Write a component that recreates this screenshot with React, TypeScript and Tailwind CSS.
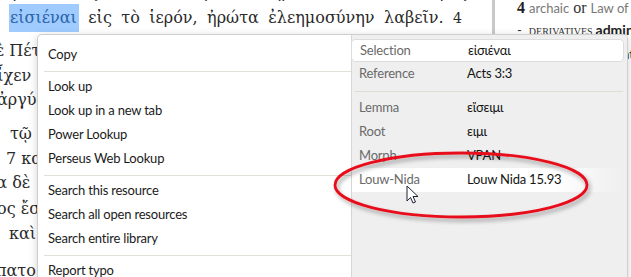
import type { ReactNode } from "react";

const greek = { fontFamily: '"DejaVu Serif", "Liberation Serif", serif' };
const serif = { fontFamily: '"Liberation Serif", "DejaVu Serif", serif' };
const sans = { fontFamily: 'Lato, "Noto Sans", sans-serif' };

// fragments of the text column that peek out left of the menu
const leftLines: { text: string; cls: string }[] = [
  { text: "δὲ Πέτ", cls: "mt-[6px] ml-[-14px]" },
  { text: "εἶχεν", cls: "mt-[0px] ml-[-11px]" },
  { text: "ἀργύρ", cls: "mt-[-1px] ml-[-3px]" },
  { text: "τῷ", cls: "mt-[9px] ml-[10px]" },
  { text: "7 κα", cls: "mt-[0px] ml-[6px]" },
  { text: "ια δὲ", cls: "mt-[-1px] ml-[-10px]" },
  { text: "ος ἔσ", cls: "mt-[1px] ml-[-3px]" },
  { text: "καὶ", cls: "mt-[0px] ml-[9px]" },
  { text: "πατο", cls: "mt-[12px] ml-[-4px]" },
];

// bits of the dictionary pane that show past the menu's right edge
const rightLines: { text: string; cls: string }[] = [
  { text: "ministration", cls: "mt-[4px] font-bold text-[14px]" },
  { text: "tion", cls: "mt-[6px] text-[12px] text-[#888]" },
  { text: "ation", cls: "mt-[70px] text-[12px] text-[#888]" },
  { text: "istrates", cls: "mt-[-2px] text-[14px] font-bold" },
  { text: "ative", cls: "mt-[8px] text-[13px]" },
  { text: "ation", cls: "mt-[60px] text-[12px] text-[#888]" },
];

function MenuItem({ children }: { children: ReactNode }) {
  return (
    <div className="h-[24px] flex items-center pl-[10px] text-[13px] tracking-[-0.2px] text-[#1b1b1b]">
      {children}
    </div>
  );
}

function Sep() {
  return <div className="ml-[6px] mt-[4px] mb-[3px] h-px bg-[#e2e0d8]" />;
}

function InfoRow({ label, value, hot }: { label: string; value: string; hot?: boolean }) {
  return (
    <div
      className={
        "h-[24px] flex items-center pl-[7px] text-[13px] tracking-[-0.2px] " +
        (hot ? "bg-gradient-to-r from-white from-[75%] to-[#efefef] mr-[6px]" : "")
      }
    >
      <span className="w-[108px] text-[#6a6a6a]">{label}</span>
      <span className="text-[#151515]">{value}</span>
    </div>
  );
}

export default function App() {
  return (
    <div className="relative w-[631px] h-[277px] overflow-hidden bg-white">
      {/* background document */}
      <div className="flex h-full">
        <div className="w-[492px] shrink-0 h-full overflow-hidden text-[16px] text-[#2a2a2a]" style={greek}>
          <div className="mt-[-21px] h-[25px] pl-[12px] pr-[24px] flex justify-between whitespace-nowrap leading-[25px]">
            <span>μέλλοντας,</span>
            <span>τὸ</span>
            <span>ἱερόν,</span>
            <span>ἠρώτα</span>
            <span>ἰδὼν</span>
            <span>πρὸς</span>
          </div>
          <div className="h-[28px] pl-[10px] pr-[30px] flex items-start justify-between whitespace-nowrap leading-[28px]">
            <span className="inline-block h-[28px] bg-[#9fcbff] text-[#2a62a8] pl-[1px] pr-[2px] -ml-[1px]">εἰσιέναι</span>
            <span>εἰς</span>
            <span>τὸ</span>
            <span>ἱερόν,</span>
            <span>ἠρώτα</span>
            <span>ἐλεημοσύνην</span>
            <span>λαβεῖν.</span>
            <span className="text-[14px]">4</span>
          </div>
          <div className="w-[37px] overflow-hidden">
            {leftLines.map((l, i) => (
              <div key={i} className={"whitespace-nowrap leading-[25px] h-[25px] " + l.cls}>
                {l.text}
              </div>
            ))}
          </div>
        </div>
        <div className="w-[3px] shrink-0 h-full bg-[#c8c8c8]" />
        <div className="flex-1 min-w-0 pl-[22px] whitespace-nowrap overflow-hidden" style={sans}>
          <div className="mt-[-1px] leading-[17px] flex items-baseline gap-[4px]">
            <span className="font-bold text-[16px] text-[#222]" style={serif}>4</span>
            <span className="text-[13px] text-[#777]">archaic</span>
            <span className="text-[16px] text-[#333]" style={serif}>or</span>
            <span className="text-[13px] text-[#777]">Law of</span>
          </div>
          <div className="mt-[4px] leading-[18px] flex items-baseline gap-[3px]">
            <span className="text-[13px] text-[#333]">-</span>
            <span className="ml-[4px] text-[10px] uppercase text-[#333]" style={serif}>derivatives</span>
            <span className="text-[14px] font-bold text-[#222]">administration</span>
          </div>
          <div className="ml-[62px] text-[#333] leading-[18px]">
            {rightLines.map((l, i) => (
              <div key={i} className={l.cls}>
                {l.text}
              </div>
            ))}
          </div>
        </div>
      </div>

      {/* context menu */}
      <div
        className="absolute left-[37px] top-[34px] w-[591px] h-[270px] flex bg-white border border-[#cfcfcf] rounded-[5px] shadow-[0_2px_8px_rgba(0,0,0,0.18)] overflow-hidden"
        style={sans}
      >
        <div className="w-[313px] pt-[8px]">
          <MenuItem>Copy</MenuItem>
          <Sep />
          <MenuItem>Look up</MenuItem>
          <MenuItem>Look up in a new tab</MenuItem>
          <MenuItem>Power Lookup</MenuItem>
          <MenuItem>Perseus Web Lookup</MenuItem>
          <Sep />
          <MenuItem>Search this resource</MenuItem>
          <MenuItem>Search all open resources</MenuItem>
          <MenuItem>Search entire library</MenuItem>
          <Sep />
          <MenuItem>Report typo</MenuItem>
        </div>
        <div className="flex-1 bg-[#efefef] border-l border-[#d6d6d6] pt-[4px]">
          <div className="mr-[3px] -ml-px h-[23px] flex items-center pl-[8px] bg-white border border-[#dcdcdc] rounded-[4px] text-[13px] tracking-[-0.2px]">
            <span className="w-[108px] text-[#6a6a6a]">Selection</span>
            <span className="text-[#151515]">εἰσιέναι</span>
          </div>
          <InfoRow label="Reference" value="Acts 3:3" />
          <div className="ml-[3px] mr-[4px] mt-[5px] mb-[4px] h-px bg-[#dedcd4]" />
          <InfoRow label="Lemma" value="εἴσειμι" />
          <InfoRow label="Root" value="ειμι" />
          <InfoRow label="Morph" value="VPAN" />
          <InfoRow label="Louw-Nida" value="Louw Nida 15.93" hot />
        </div>
      </div>

      {/* annotation ellipse + mouse pointer */}
      <svg className="absolute inset-0 pointer-events-none" width="631" height="277">
        <defs>
          <filter id="sh" x="-20%" y="-50%" width="140%" height="200%">
            <feDropShadow dx="2" dy="3" stdDeviation="2" floodColor="#000" floodOpacity="0.35" />
          </filter>
        </defs>
        <ellipse cx="461" cy="185" rx="126" ry="32" fill="none" stroke="#e8101a" strokeWidth="2.8" filter="url(#sh)" />
        <path
          d="M407 186 L407 201 L410.5 197.5 L413 203 L415.5 202 L413 196.5 L418 196.5 Z"
          fill="#fff"
          stroke="#1b2233"
          strokeWidth="1"
          strokeLinejoin="round"
        />
      </svg>
    </div>
  );
}
